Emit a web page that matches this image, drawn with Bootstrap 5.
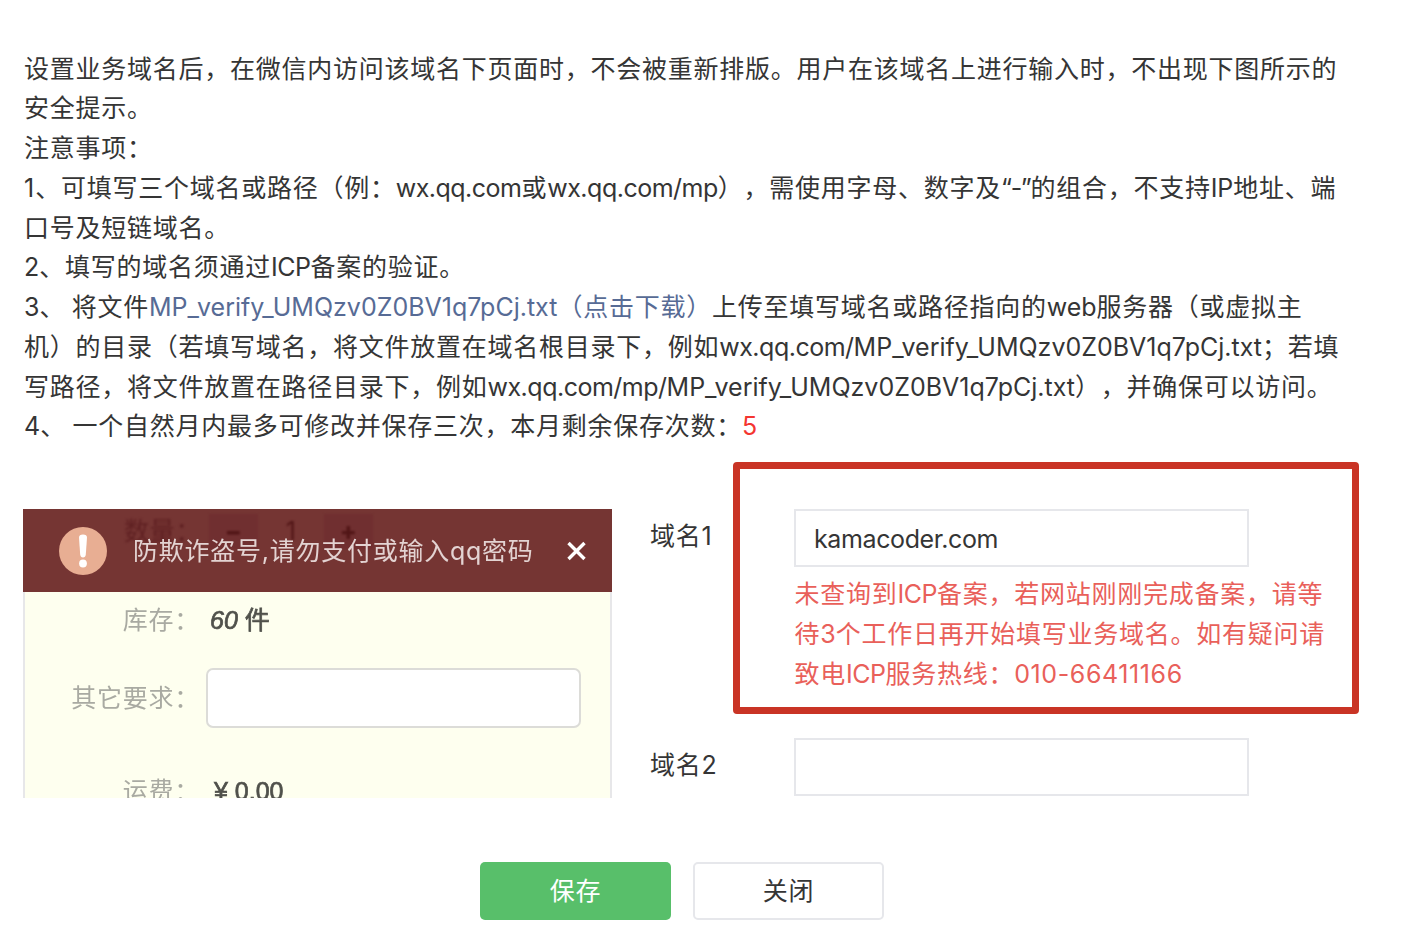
<!DOCTYPE html>
<html lang="zh-CN">
<head>
  <meta charset="UTF-8" />
  <meta name="viewport" content="width=device-width, initial-scale=1.0"/>
  <title>业务域名设置</title>
  <link href="https://cdn.jsdelivr.net/npm/bootstrap@5.3.0/dist/css/bootstrap.min.css" rel="stylesheet"/>
  <style>
    body {
      font-family: Inter, "Noto Sans CJK SC", sans-serif;
      font-size: 25px;
      line-height: 39.75px;
      letter-spacing: .75px;
      color: #353535;
      text-spacing-trim: space-all;
    }
    .page { padding: 49.6px 0 0 23px; }

    /* notice text */
    .tips { height: 412.4px; padding-left: 1px; white-space: nowrap; }
    .lat { letter-spacing: 0; }
    .dom { letter-spacing: -.5px; }
    .quote { letter-spacing: -1.4px; }
    .one { letter-spacing: 1px; }
    .tel { letter-spacing: .6px; }
    .file-link { color: #576b95; text-decoration: none; }
    .left-count { color: #f43530; }

    /* phone preview */
    .preview {
      width: 589px;
      height: 289px;
      margin-top: 47px;
      background: #feffef;
      letter-spacing: .75px;
    }
    .preview-bar { height: 83px; background: #753533; padding: 1px 26px 0 36px; }
    .preview-bar svg { filter: blur(.4px); }
    .preview-bar .warn-text { color: #e3d3d2; margin-left: 26px; filter: blur(.4px); padding-top: 1px; }
    .ghost { top: 3px; left: 101px; color: #5f2022; filter: blur(.8px); }
    .ghost .step { width: 49px; height: 35px; background: #702f30; font-weight: 800; line-height: 35px; color: #511516; }
    .ghost .num { width: 66px; color: #511516; }
    .preview-body { border: solid #e7e7e9; border-width: 0 2px; height: 206px; }
    .preview-label { width: 175px; text-align: right; color: #a9aaa2; padding-top: 1px; }
    .preview-value { margin-left: 10px; padding-top: 1px; letter-spacing: 0; color: #50514b; font-family: "Liberation Sans", "Noto Sans CJK SC", sans-serif; -webkit-text-stroke: .7px #50514b; }
    .preview-body .soft-line { height: 60px; filter: blur(.5px); }
    .fake-input { width: 375px; height: 60px; margin-left: 6px; background: #fff; border: 2px solid #dcdcd8; border-radius: 7px; }

    /* domain form */
    .form-side { margin-left: 38px; }
    .domain-label { width: 83px; padding-top: 55px; }
    .second-line .domain-label { width: 144px; padding-top: 8px; }
    .second-line { margin-top: 24px; }
    .red-frame { width: 626px; height: 252px; border: 7px solid #c93425; border-radius: 4px; padding: 40px 0 0 54px; }
    .domain-input {
      width: 455px;
      height: 58px;
      border: 2px solid #e6e7eb;
      border-radius: 0;
      padding: 2px 18px 0;
      font-size: 25px;
      letter-spacing: -.38px;
      color: #353535;
    }
    .error-text { color: #e9605a; padding: 8.4px 0 0 .5px; white-space: nowrap; }

    .btn-box { width: 191px; height: 58px; font-size: 25px; border-radius: 5px; letter-spacing: .75px; padding: 8px 0 6px; }
    .btn-save, .btn-save:hover { background: #58bf6a; color: #fff; border: 0; }
    .btn-close-page { background: #fff; color: #353535; border: 2px solid #e6e7eb; }
    .actions { padding-left: 457px; gap: 22px; margin-top: 64px; }
  </style>
</head>
<body>
  <div class="page">
    <div class="tips">
      <div>设置业务域名后，在微信内访问该域名下页面时，不会被重新排版。用户在该域名上进行输入时，不出现下图所示的</div>
      <div>安全提示。</div>
      <div>注意事项：</div>
      <div><span class="one">1</span>、可填写三个域名或路径（例：<span class="dom">wx.qq.com</span>或<span class="dom">wx.qq.com/mp</span>），需使用字母、数字及<span class="quote">“-”</span>的组合，不支持<span class="lat">IP</span>地址、端</div>
      <div>口号及短链域名。</div>
      <div><span class="lat">2</span>、填写的域名须通过<span class="dom">ICP</span>备案的验证。</div>
      <div><span class="lat">3</span>、<span class="dom"> </span>将文件<a href="#" class="file-link"><span class="lat">MP_verify_UMQzv0Z0BV1q7pCj.txt</span>（点击下载）</a>上传至填写域名或路径指向的<span class="lat">web</span>服务器（或虚拟主</div>
      <div>机）的目录（若填写域名，将文件放置在域名根目录下，例如<span class="dom">wx.qq.com/</span><span class="lat">MP_verify_UMQzv0Z0BV1q7pCj.txt</span>；若填</div>
      <div>写路径，将文件放置在路径目录下，例如<span class="dom">wx.qq.com/mp/</span><span class="lat">MP_verify_UMQzv0Z0BV1q7pCj.txt</span>），并确保可以访问。</div>
      <div><span class="lat">4</span>、<span class="dom"> </span>一个自然月内最多可修改并保存三次，本月剩余保存次数：<span class="left-count">5</span></div>
    </div>

    <div class="d-flex align-items-start">
      <div class="preview overflow-hidden flex-shrink-0">
        <div class="preview-bar position-relative d-flex align-items-center">
          <!-- order form showing through the warning bar -->
          <div class="ghost position-absolute d-flex align-items-center">
            <span>数量：</span>
            <span class="step text-center ms-2">−</span>
            <span class="num text-center">1</span>
            <span class="step text-center">+</span>
          </div>
          <svg class="position-relative" width="48" height="48" viewBox="0 0 48 48">
            <circle cx="24" cy="24" r="24" fill="#e8ae93"/>
            <path d="M20 10.500Q20 7.500 24 7.500T28 10.500L26.800 27.500Q26.500 30.500 24 30.500T21.200 27.500Z" fill="#fff"/>
            <circle cx="24" cy="36.500" r="3.900" fill="#fff"/>
          </svg>
          <span class="warn-text position-relative">防欺诈盗号,请勿支付或输入qq密码</span>
          <svg class="ms-auto" width="19" height="20" viewBox="0 0 19 20">
            <path d="M1.500 2L17.500 18M17.500 2L1.500 18" stroke="#fff" stroke-width="3.400"/>
          </svg>
        </div>
        <div class="preview-body">
          <div class="soft-line d-flex pt-2">
            <span class="preview-label">库存：</span>
            <span class="preview-value"><i>60</i> 件</span>
          </div>
          <div class="soft-line d-flex align-items-center mt-3">
            <span class="preview-label">其它要求：</span>
            <span class="fake-input"></span>
          </div>
          <div class="soft-line d-flex pt-5 pb-0">
            <span class="preview-label lh-sm pt-0">运费：</span>
            <span class="preview-value lh-sm ps-1 pt-0">¥ 0.00</span>
          </div>
        </div>
      </div>

      <div class="form-side">
        <div class="d-flex">
          <label class="domain-label" for="domain1">域名1</label>
          <div class="red-frame">
            <input type="text" id="domain1" class="form-control domain-input" value="kamacoder.com"/>
            <div class="error-text">
              <div>未查询到<span class="dom">ICP</span>备案，若网站刚刚完成备案，请等</div>
              <div>待<span class="lat">3</span>个工作日再开始填写业务域名。如有疑问请</div>
              <div>致电<span class="dom">ICP</span>服务热线：<span class="tel">010-66411166</span></div>
            </div>
          </div>
        </div>
        <div class="d-flex second-line">
          <label class="domain-label" for="domain2">域名2</label>
          <input type="text" id="domain2" class="form-control domain-input"/>
        </div>
      </div>
    </div>

    <div class="actions d-flex">
      <button type="button" class="btn btn-box btn-save">保存</button>
      <button type="button" class="btn btn-box btn-close-page">关闭</button>
    </div>
  </div>
  <script src="https://cdn.jsdelivr.net/npm/bootstrap@5.3.0/dist/js/bootstrap.bundle.min.js"></script>
</body>
</html>
